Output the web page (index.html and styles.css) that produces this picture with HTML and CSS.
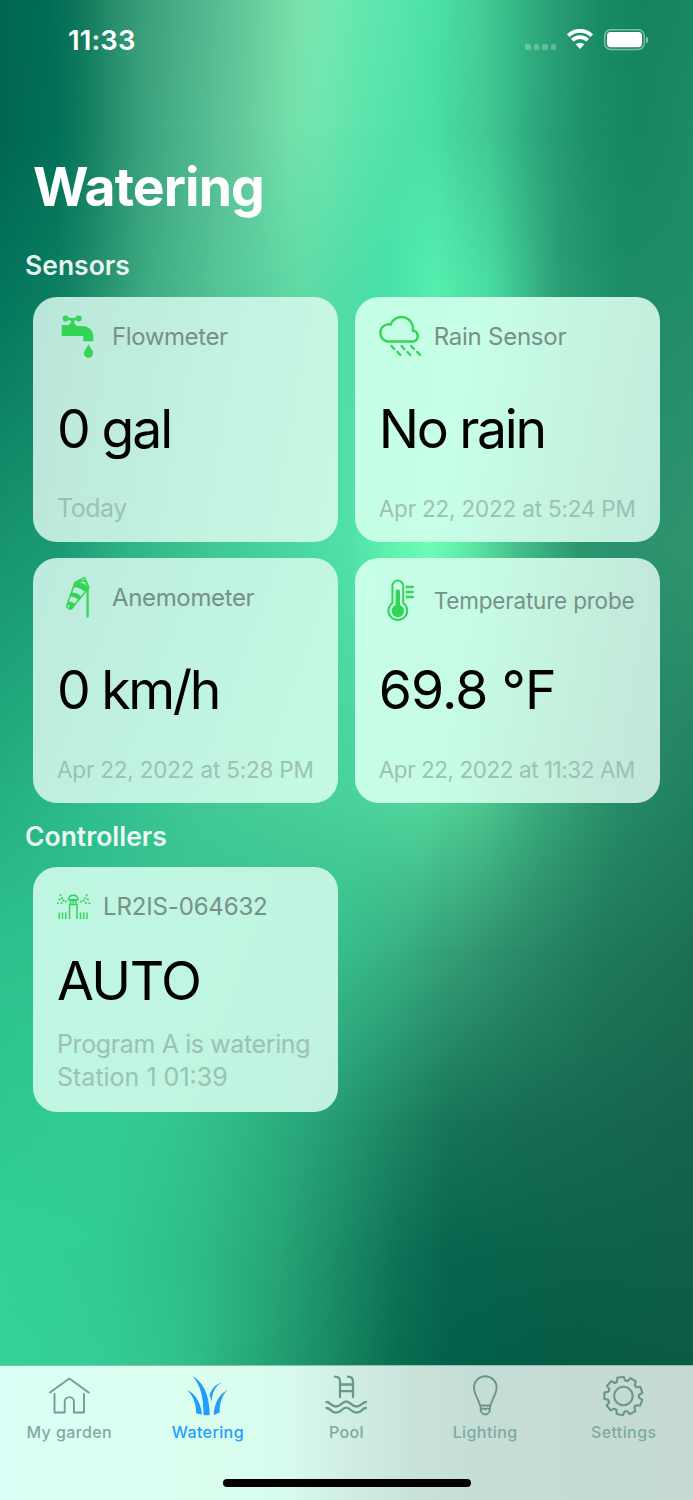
FILE: index.html
```html
<!DOCTYPE html>
<html lang="en">
<head>
<meta charset="utf-8">
<title>Watering</title>
<link rel="stylesheet" href="styles.css">
</head>
<body>
<div class="screen">
  <div class="aurora" aria-hidden="true">
    <i class="band band-0"></i><i class="band band-1"></i><i class="band band-2"></i><i class="band band-3"></i><i class="band band-4"></i><i class="band band-5"></i><i class="band band-6"></i><i class="band band-7"></i><i class="band band-8"></i>
  </div>
  <div class="app">
    <header class="status">
      <time class="clock">11:33</time>
      <div class="indicators">
        <div class="signal"><i></i><i></i><i></i><i></i></div>
        <svg class="wifi" width="28" height="22" viewBox="0 0 28 22">
          <path d="M2.200 7.600a17 17 0 0 1 23.600 0M6.300 12.300a11 11 0 0 1 15.400 0" fill="none" stroke="#fff" stroke-width="3.700"/>
          <path d="M9.700 16.300a6.400 6.400 0 0 1 8.600 0L14 21z" fill="#fff"/>
        </svg>
        <svg class="battery" width="45" height="22" viewBox="0 0 45 22">
          <rect x=".8" y=".8" width="39.400" height="19.600" rx="6" fill="none" stroke="#fff" stroke-opacity=".45" stroke-width="1.500"/>
          <rect x="3" y="3" width="35" height="15.200" rx="3.600" fill="#fff"/>
          <path d="M42 7.600c3 1.200 3 5.600 0 6.800z" fill="#fff" fill-opacity=".5"/>
        </svg>
      </div>
    </header>

    <main class="content">
      <h1 class="title">Watering</h1>

      <h2 class="section">Sensors</h2>
      <div class="grid">
        <article class="card tone-a">
          <div class="head">
            <svg class="icon" width="44" height="44" viewBox="0 0 44 44" fill="#34d557">
              <circle cx="8.700" cy="3.400" r="3"/><circle cx="21.700" cy="3.400" r="3"/>
              <path d="M9 2.300q6.300 1.400 12.600 0v2.500q-2.600 0-4.400.9v3.100q2 .6 2.600 2.200h5.100c7 0 11.500 4.500 11.500 11v4.300H26.200V21H4.700V10h7.200q.6-1.600 2.200-2.200V5.700Q11.600 4.800 9 4.800z"/>
              <path d="M31.500 29.200c2 4 4.600 6.500 4.600 9a4.600 4.600 0 0 1-9.200 0c0-2.500 2.600-5 4.600-9z"/>
            </svg>
            <h3 class="name name-flow">Flowmeter</h3>
          </div>
          <p class="value v-gal">0 gal</p>
          <p class="note note-lg">Today</p>
        </article>

        <article class="card tone-b">
          <div class="head">
            <svg class="icon" width="44" height="44" viewBox="0 0 44 44" fill="none" stroke="#34d557" stroke-width="2.400" stroke-linecap="round">
              <path d="M9.500 26.500a8.600 8.600 0 1 1 2.200-17A11.500 11.500 0 0 1 33.800 15.500a5.600 5.600 0 0 1 .6 11z"/>
              <path d="M12.500 31l2.800 3M18.500 37l2.800 3M22.500 31l2.800 3M28.500 37l2.800 3M32.200 31l2.800 3M38.200 37l2.800 3"/>
            </svg>
            <h3 class="name name-rain">Rain Sensor</h3>
          </div>
          <p class="value v-rain">No rain</p>
          <p class="note">Apr 22, 2022 at 5:24 PM</p>
        </article>

        <article class="card tone-c">
          <div class="head">
            <svg class="icon icon-wind" width="44" height="44" viewBox="0 0 44 44">
              <path d="M18 7.500L27.500 2.500l4.600 10-4.600-7L18 7.500 9.600 31.300q1.200 3 4.800 2.600L32 12.500" fill="none" stroke="#34d557" stroke-width="1.500"/>
              <path d="M18 7.500q8-1.500 14 5.300l-3.400 4.500q-5.600-5-12.200-5.100zM14.800 17.200q5.600.6 10 4.200l-3 4q-3.600-3.500-8.800-3.800zM11.700 26.400q4.200.3 7 2.800l-3.900 5.200-3.500-.6 1.400-3-2.200-1.200z" fill="#34d557"/>
              <path d="M30.600 14v28.500" stroke="#34d557" stroke-width="2.200"/>
            </svg>
            <h3 class="name name-wind">Anemometer</h3>
          </div>
          <p class="value v-wind">0 km/h</p>
          <p class="note note-528">Apr 22, 2022 at 5:28 PM</p>
        </article>

        <article class="card tone-d">
          <div class="head head-probe">
            <svg class="icon" width="44" height="44" viewBox="0 0 44 44" fill="none" stroke="#34d557">
              <path d="M13.400 24V7a5.400 5.400 0 0 1 10.800 0v17a9.400 9.400 0 1 1-10.800 0z" stroke-width="2"/>
              <path d="M18.800 12.500v19" stroke-width="4.400" stroke-linecap="round"/>
              <circle cx="18.800" cy="32" r="6.200" fill="#34d557" stroke="none"/>
              <path d="M27.500 8h6.300M27.500 13h6.300M27.500 18h6.300" stroke-width="2.300" stroke-linecap="round"/>
            </svg>
            <h3 class="name name-probe">Temperature probe</h3>
          </div>
          <p class="value v-temp">69.8 °F</p>
          <p class="note note-1132">Apr 22, 2022 at 11:32 AM</p>
        </article>
      </div>

      <h2 class="section section-ctrl">Controllers</h2>
      <div class="grid">
        <article class="card tone-e controller">
          <div class="head">
            <svg class="icon icon-ctrl" width="34" height="28" viewBox="0 0 34 28" fill="none" stroke="#34d557" stroke-width="1.500">
              <path d="M2.200 19.500v6.500M5.500 19.500v6.500M8.800 19.500v6.500M23.500 19.500v6.500M26.700 19.500v6.500M30 19.500v6.500M12.500 26V11.500h7.500v14.500M13.600 11.500V7.500h5.300v4M11.400 6.700h9.700q-.4-4.500-4.800-4.500t-4.900 4.500zM16.300 7.500v3"/>
              <path d="M3.500 2.300h.1M5 5.200h.1M2.600 6.500h.1M.8 10.200h.1M6.400 7.500h.1M4.500 10h.1M8.800 8.500h.1M29.600 2.300h.1M28.200 5.200h.1M30.800 6.300h.1M26.600 7.500h.1M29 10h.1M32.300 10.200h.1M24.100 8.500h.1" stroke-width="2" stroke-linecap="round"/>
            </svg>
            <h3 class="name name-ctrl">LR2IS-064632</h3>
          </div>
          <p class="value v-auto">AUTO</p>
          <p class="note note-ctrl"><span class="line-a">Program A is watering</span><br><span class="line-b">Station 1 01:39</span></p>
        </article>
      </div>
    </main>

    <nav class="tabs">
      <div class="tab-list">
        <a class="tab">
          <svg width="44" height="44" viewBox="0 0 44 44" fill="none" stroke="#6d9f93" stroke-width="1.900" stroke-linecap="round" stroke-linejoin="round"><path d="M3 18.500L22.300 4.500 41.700 18.500M7.500 20v18.500h10.200V27.700a4.600 4.600 0 0 1 9.200 0v10.800H37V20"/></svg>
          <span>My garden</span>
        </a>
        <a class="tab active">
          <svg width="44" height="44" viewBox="0 0 44 44" fill="#239dfb"><path d="M7.500 2C18 8 24.500 20 24.700 41q-3.200.5-6.200 0C18.700 24 15.500 11 7.500 2zM2.200 16C11 20.500 16 29 17 40.500l-5.800-1.200C11.200 30 8.500 22.500 2.200 16zM36.500 8.500C29.500 12.500 27 19.500 26.800 28l-2.300-7.200C27 14.500 30.500 10.500 36.500 8.500zM42.500 16c-6 6-8 13.500-7.800 22.500L28.600 41C29.300 30 33.500 20.500 42.500 16z"/></svg>
          <span>Watering</span>
        </a>
        <a class="tab">
          <svg width="44" height="44" viewBox="0 0 44 44" fill="none" stroke="#6a998b" stroke-width="2.300" stroke-linecap="round"><path d="M11 2.700q5 0 5 5v15.500M24 2.700q5 0 5 5v15.500M16 10.500h13M16 17.200h13"/><path d="M2.500 28c4 0 4.500 4.500 9.500 4.500S18 27.500 22.300 27.500s5 5 10.200 5S38 28 42 28M2.500 34c4 0 4.500 4.700 9.500 4.700s6-5 10.300-5 5 5 10.200 5S38 34 42 34"/></svg>
          <span>Pool</span>
        </a>
        <a class="tab">
          <svg width="44" height="44" viewBox="0 0 44 44" fill="none" stroke="#6b9688" stroke-width="1.900" stroke-linejoin="round"><path d="M17 31.500C15.500 25 11 20 11 13.500a11.300 11.300 0 0 1 22.600 0C33.600 20 29 25 27.500 31.500zM17.400 32l.5 5.500q4.400 6 8.800 0l.5-5.500M18.500 35.500q2-2.300 3.800 0 1.800-2.300 3.800 0"/></svg>
          <span>Lighting</span>
        </a>
        <a class="tab">
          <svg width="44" height="44" viewBox="-22 -22 44 44" fill="none" stroke="#6b9688" stroke-width="2.100" stroke-linejoin="round" stroke-linecap="round">
            <defs><path id="tooth" d="M-5.300-14.570L-4-15.200-3.200-19H3.200L4-15.200 5.300-14.570"/></defs>
            <g transform="translate(.4 0)">
              <circle r="9.300"/>
              <use href="#tooth" transform="rotate(-9)"/><use href="#tooth" transform="rotate(31)"/><use href="#tooth" transform="rotate(71)"/><use href="#tooth" transform="rotate(111)"/><use href="#tooth" transform="rotate(151)"/><use href="#tooth" transform="rotate(191)"/><use href="#tooth" transform="rotate(231)"/><use href="#tooth" transform="rotate(271)"/><use href="#tooth" transform="rotate(311)"/>
            </g>
          </svg>
          <span>Settings</span>
        </a>
      </div>
      <div class="home-bar"></div>
    </nav>
  </div>
</div>
</body>
</html>
```

FILE: styles.css
```css
* { box-sizing: border-box; margin: 0; padding: 0; }
body { font-family: Inter, "Liberation Sans", sans-serif; background: #1a8a66; }
.screen { display: grid; width: 693px; height: 1500px; overflow: hidden; }
.aurora, .app { grid-area: 1 / 1; }
.aurora { display: grid; }
.app { z-index: 1; display: flex; flex-direction: column; height: 1500px; }

/* Each band paints one row of the mesh and fades in from the row above it. */
.band { grid-area: 1 / 1; --from: 0px; --to: 0px; -webkit-mask-image: linear-gradient(180deg, transparent var(--from), #000 var(--to)); mask-image: linear-gradient(180deg, transparent var(--from), #000 var(--to)); }
.band-0 { -webkit-mask-image: none; mask-image: none; background: linear-gradient(90deg, #006750 0, #016b54 45px, #0a735a 70px, #17805f 92px, #2a8f6f 115px, #3fa27d 150px, #50b68d 200px, #65cb9c 250px, #7ce2ac 300px, #74e8b4 328px, #64e8b0 360px, #58e6ae 400px, #4adfa6 440px, #45cf96 480px, #34b585 520px, #289c74 560px, #1a8a66 600px, #158461 640px, #1b8762 693px); }
.band-1 { --from: 0px; --to: 130px; background: linear-gradient(90deg, #00654f 0, #027057 55px, #0e7a5d 80px, #208a69 105px, #38a07c 140px, #4cb48c 185px, #63c89b 240px, #74e0ab 290px, #70e5b0 320px, #5be4ab 365px, #4adfa6 430px, #40c792 490px, #2ca57b 540px, #1c8e69 590px, #178662 640px, #1f8a66 693px); }
.band-2 { --from: 130px; --to: 285px; background: linear-gradient(90deg, #03755b 0, #0c7e61 60px, #24906e 100px, #3fac84 150px, #55c496 220px, #60dba6 300px, #50dda6 350px, #46e0a8 385px, #56eeaf 435px, #48dca0 490px, #38b888 530px, #2c9c75 560px, #1c8c67 620px, #218c68 693px); }
.band-3 { --from: 285px; --to: 549px; background: linear-gradient(90deg, #18956f 0, #1a9b74 60px, #30b487 130px, #3dc592 200px, #49d8a2 300px, #50e0a8 346px, #62f5b0 400px, #6dfdb6 430px, #5ee8a6 470px, #44bd88 520px, #2b9670 580px, #2a926d 640px, #31946f 693px); }
.band-4 { --from: 549px; --to: 810px; background: linear-gradient(90deg, #25b284 0, #30be8e 100px, #40c994 200px, #46ce98 300px, #48d199 346px, #50d49a 420px, #4cc58e 480px, #38a87a 540px, #268a66 620px, #217f5e 693px); }
.band-5 { --from: 810px; --to: 950px; background: linear-gradient(90deg, #2dc18d 0, #38c291 200px, #38bd8b 346px, #38b083 400px, #359f77 450px, #2b8b69 520px, #20795b 600px, #1b7054 693px); }
.band-6 { --from: 950px; --to: 1120px; background: linear-gradient(90deg, #2fc992 0, #33cd94 100px, #34c891 160px, #31bd8a 220px, #2bae7f 280px, #259a73 340px, #1e8563 400px, #187559 450px, #176d54 520px, #15644d 693px); }
.band-7 { --from: 1120px; --to: 1250px; background: linear-gradient(90deg, #33d097 0, #32cd92 100px, #2ebb86 200px, #27a577 280px, #1c8b67 340px, #0e7358 400px, #07664d 450px, #0c624b 560px, #0f6048 693px); }
.band-8 { --from: 1250px; --to: 1365px; background: linear-gradient(90deg, #35d197 0, #34cd94 100px, #30c28b 180px, #25a677 260px, #188661 340px, #096c50 400px, #03614a 450px, #075b45 560px, #0c5c44 693px); }

.status { display: flex; justify-content: space-between; height: 80px; padding: 0 44px 0 68px; color: #fff; }
.clock { font-size: 27.500px; font-weight: 600; line-height: 80px; letter-spacing: .1px; }
.indicators { display: flex; height: 80px; padding-top: 28px; }
.signal { display: flex; gap: 3px; padding-top: 16px; margin-right: 10px; }
.signal i { width: 5.500px; height: 5.500px; border-radius: 1.600px; background: rgba(255, 255, 255, .27); }
.wifi { margin-right: 10px; }
.battery { margin-top: 1px; }

.content { flex: 1; padding: 0 33px; }
.title { height: 146px; padding-top: 72px; font-size: 53.500px; line-height: 70px; font-weight: 700; letter-spacing: -.9px; color: #fff; }
.section { height: 70.500px; margin-left: -8px; padding-top: 24px; font-size: 26.500px; line-height: 30px; font-weight: 600; letter-spacing: 0; color: rgba(255, 255, 255, .92); }
.section-ctrl { height: 64px; padding-top: 18px; }
.grid { display: grid; grid-template-columns: repeat(2, 305.250px); gap: 16px 16.500px; }
.card { display: grid; grid-template-rows: 80px 104px 1fr; height: 245.250px; padding-left: 24px; border-radius: 24px; overflow: hidden; white-space: nowrap; }
.tone-a { background: linear-gradient(100deg, #bae6d9, #c2f1e0 50%, #c8f9e4); }
.tone-b { background: linear-gradient(100deg, #c4ffe5, #c7ffe7 35%, #c4f2df 75%, #c3ebdc); }
.tone-c { background: linear-gradient(110deg, #bdeade, #c0f3e0 50%, #c4fae3); }
.tone-d { background: linear-gradient(100deg, #c8ffe8, #c6fbe4 40%, #c3ebdb 80%, #c1e7da); }
.tone-e { background: linear-gradient(110deg, #bff6e2, #c0f6e1 50%, #c0f1df); }
.head { display: flex; align-items: center; }
.head-probe { padding-top: 6px; }
.icon { flex: none; margin-right: 11px; }
.icon-wind { margin-top: -2px; }
.name { font-size: 24px; line-height: 32px; font-weight: 400; color: #76908a; }
.name-flow { letter-spacing: -.4px; }
.name-rain { letter-spacing: -.25px; }
.name-wind { letter-spacing: -.35px; }
.name-probe { font-size: 22.500px; letter-spacing: -.2px; }
.name-ctrl { letter-spacing: -.15px; }
.value { font-size: 53.500px; line-height: 104px; font-weight: 400; letter-spacing: -1.500px; color: #000; }
.v-gal { letter-spacing: -2.100px; }
.v-rain, .v-wind { letter-spacing: -2.300px; }
.v-temp { letter-spacing: -.9px; }
.note { font-size: 22.500px; line-height: 56px; letter-spacing: -.2px; color: #9cc1b4; }
.note-1132 { letter-spacing: -.45px; }
.note-lg { font-size: 25px; line-height: 54px; letter-spacing: -.5px; }
.controller { grid-template-rows: 79px 70px 1fr; }
.controller .value { line-height: 70px; }
.icon-ctrl { margin-right: 12px; }
.note-ctrl { padding-top: 11.500px; font-size: 25px; line-height: 33.500px; }
.line-a { letter-spacing: -.38px; }
.line-b { letter-spacing: 0; }

.tabs { display: flex; flex-direction: column; align-items: center; height: 135px; border-top: 1px solid #8cbfae; background: linear-gradient(90deg, #dbfff6 0, #daffef 190px, #d7fbed 285px, #d0ede4 350px, #c8e2da 420px, #c5ddd6 480px, #c4dad3 693px); }
.tab-list { display: grid; grid-template-columns: repeat(5, 1fr); width: 100%; height: 117px; }
.tab { display: flex; flex-direction: column; align-items: center; padding-top: 8px; font-size: 16px; line-height: 22px; font-weight: 500; letter-spacing: .4px; color: #7eaa9f; }
.tab svg { margin-left: -1px; }
.tab span { margin-top: 3px; }
.tab.active { color: #239dfb; }
.home-bar { width: 248px; height: 8px; margin-top: -4px; border-radius: 4px; background: #000; }
```
